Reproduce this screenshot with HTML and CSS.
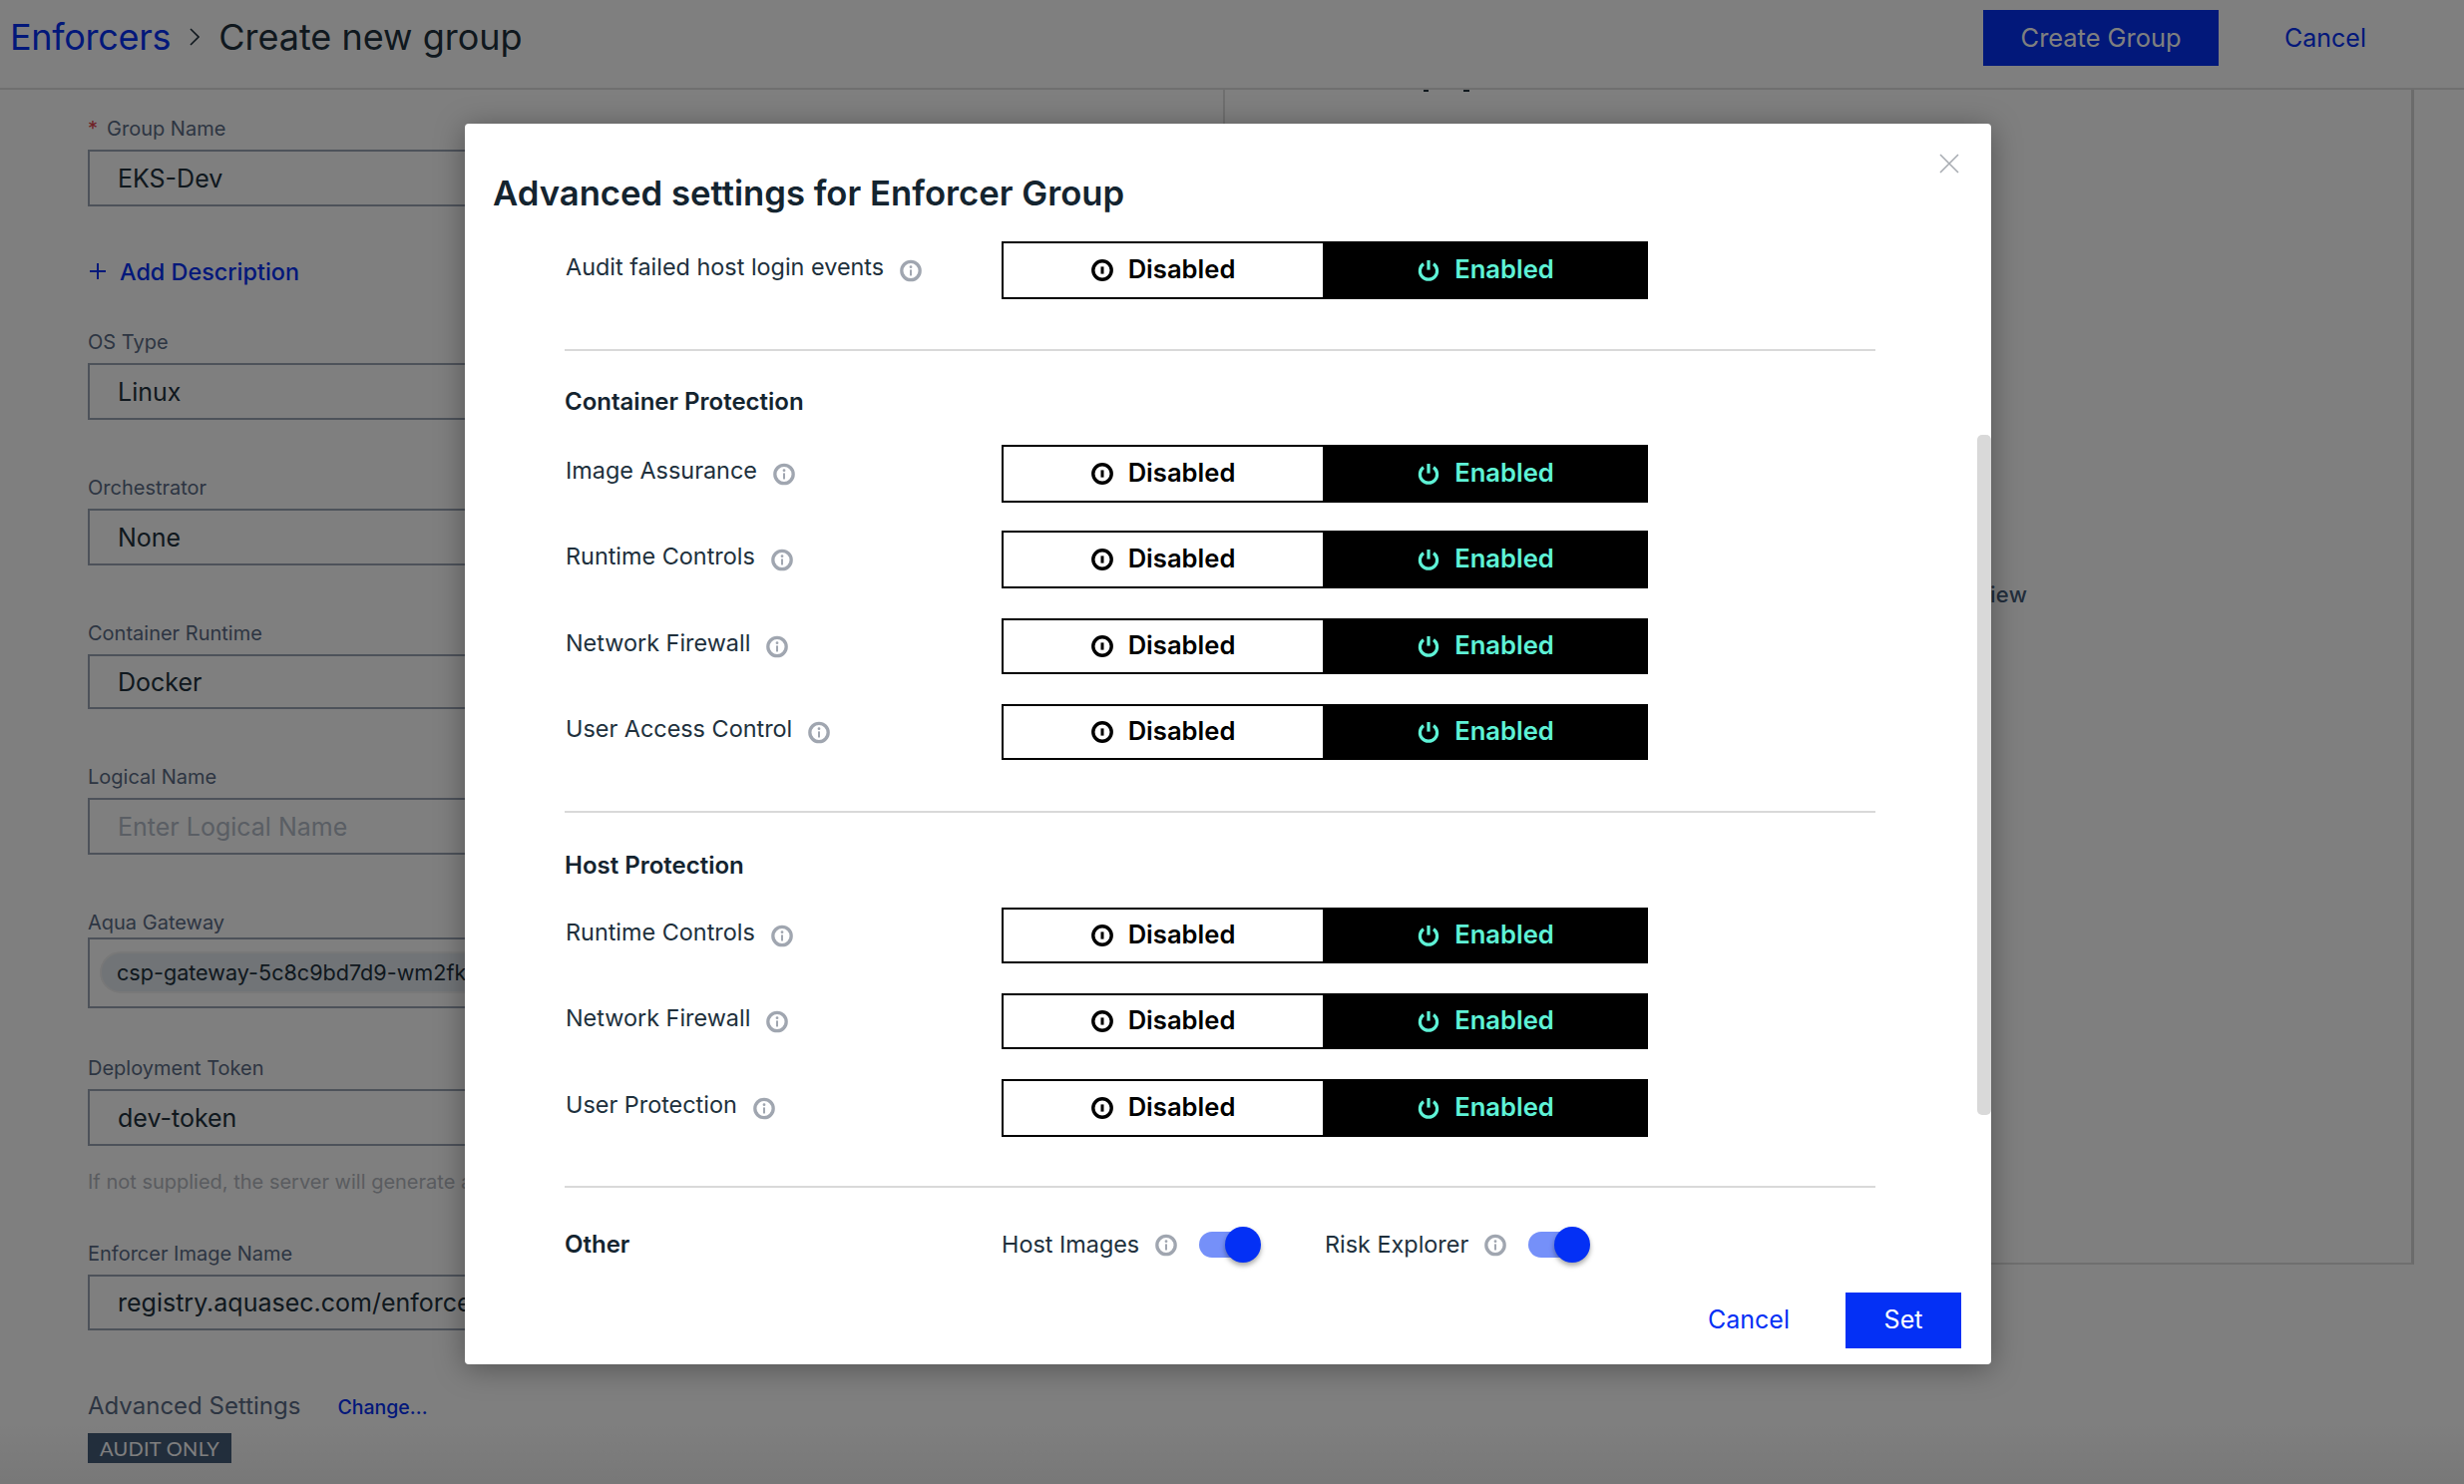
FILE: index.html
```html
<!DOCTYPE html>
<html lang="en">
<head>
<meta charset="utf-8">
<title>Create new group</title>
<link rel="stylesheet" href="styles.css">
</head>
<body>
<svg class="defs" width="0" height="0" aria-hidden="true">
  <symbol id="i-info" viewBox="0 0 24 24">
    <circle cx="12" cy="12" r="10" fill="none" stroke="#a0a6b0" stroke-width="3.6"/>
    <circle cx="12" cy="7.8" r="1.5" fill="#a0a6b0"/>
    <path d="M12 10.8v6.6" stroke="#a0a6b0" stroke-width="2.2" fill="none"/>
  </symbol>
  <symbol id="i-off" viewBox="0 0 22 22">
    <circle cx="11" cy="11" r="9.2" fill="none" stroke="#000" stroke-width="3.4"/>
    <path d="M11 7.4v7.2" stroke="#000" stroke-width="3" fill="none"/>
  </symbol>
  <symbol id="i-on" viewBox="0 0 22 22">
    <path d="M6 4.6a8.6 8.6 0 1 0 10 0" fill="none" stroke="#5ef2d6" stroke-width="3.2"/>
    <path d="M11 1v9.6" stroke="#5ef2d6" stroke-width="3.2" fill="none"/>
  </symbol>
</svg>

<div class="page">
  <header class="topbar">
    <nav class="crumbs">
      <a class="crumb-link">Enforcers</a>
      <svg class="crumb-sep" viewBox="0 0 10 18"><path d="M1 1l8 8-8 8" fill="none" stroke="#fff" stroke-width="1.6"/></svg>
      <span class="crumb-current">Create new group</span>
    </nav>
    <div class="top-actions">
      <button class="btn-primary">Create Group</button>
      <a class="top-cancel">Cancel</a>
    </div>
  </header>

  <main class="content">
    <section class="form">
      <div class="field field-first">
        <label class="label"><span class="req">*</span>Group Name</label>
        <div class="input">EKS-Dev</div>
      </div>
      <a class="add-desc">
        <svg class="plus" viewBox="0 0 18 18"><path d="M9 1v16M1 9h16" stroke="#0430f5" stroke-width="2" fill="none"/></svg>
        Add Description
      </a>
      <div class="field field-os">
        <label class="label">OS Type</label>
        <div class="input">Linux</div>
      </div>
      <div class="field">
        <label class="label">Orchestrator</label>
        <div class="input">None</div>
      </div>
      <div class="field">
        <label class="label">Container Runtime</label>
        <div class="input input-55">Docker</div>
      </div>
      <div class="field">
        <label class="label">Logical Name</label>
        <div class="input input-placeholder">Enter Logical Name</div>
      </div>
      <div class="field field-tight">
        <label class="label label-close">Aqua Gateway</label>
        <div class="input input-chip"><span class="chip">csp-gateway-5c8c9bd7d9-wm2fk</span></div>
      </div>
      <div class="field field-gap48">
        <label class="label">Deployment Token</label>
        <div class="input">dev-token</div>
        <p class="help">If not supplied, the server will generate a token automatically</p>
      </div>
      <div class="field field-gap48">
        <label class="label">Enforcer Image Name</label>
        <div class="input input-56">registry.aquasec.com/enforcer:latest</div>
      </div>
      <div class="advanced">
        <span class="advanced-title">Advanced Settings</span>
        <a class="change">Change...</a>
      </div>
      <span class="badge">AUDIT ONLY</span>
    </section>

    <section class="panel">
      <span class="mark mark-a"></span>
      <span class="mark mark-b"></span>
      <p class="panel-note">Overview</p>
    </section>
  </main>

  <div class="overlay">
    <div class="modal">
      <svg class="close" viewBox="0 0 20 20"><path d="M1 1l18 18M19 1L1 19" stroke="#a8acb2" stroke-width="1.6" fill="none"/></svg>
      <h2 class="modal-title">Advanced settings for Enforcer Group</h2>
      <div class="modal-body">
        <div class="section section-audit">
          <div class="row">
            <div class="row-label"><span class="row-text">Audit failed host login events</span><svg class="info"><use href="#i-info"/></svg></div>
            <div class="toggle">
              <div class="seg seg-off"><svg class="seg-icon"><use href="#i-off"/></svg><span class="seg-text">Disabled</span></div>
              <div class="seg seg-on"><svg class="seg-icon"><use href="#i-on"/></svg><span class="seg-text">Enabled</span></div>
            </div>
          </div>
        </div>

        <div class="section section-container">
          <h3 class="section-title">Container Protection</h3>
          <div class="rows">
            <div class="row">
              <div class="row-label"><span class="row-text">Image Assurance</span><svg class="info"><use href="#i-info"/></svg></div>
              <div class="toggle">
                <div class="seg seg-off"><svg class="seg-icon"><use href="#i-off"/></svg><span class="seg-text">Disabled</span></div>
                <div class="seg seg-on"><svg class="seg-icon"><use href="#i-on"/></svg><span class="seg-text">Enabled</span></div>
              </div>
            </div>
            <div class="row row-tight">
              <div class="row-label"><span class="row-text">Runtime Controls</span><svg class="info"><use href="#i-info"/></svg></div>
              <div class="toggle">
                <div class="seg seg-off"><svg class="seg-icon"><use href="#i-off"/></svg><span class="seg-text">Disabled</span></div>
                <div class="seg seg-on"><svg class="seg-icon"><use href="#i-on"/></svg><span class="seg-text">Enabled</span></div>
              </div>
            </div>
            <div class="row">
              <div class="row-label"><span class="row-text">Network Firewall</span><svg class="info"><use href="#i-info"/></svg></div>
              <div class="toggle toggle-56">
                <div class="seg seg-off"><svg class="seg-icon"><use href="#i-off"/></svg><span class="seg-text">Disabled</span></div>
                <div class="seg seg-on"><svg class="seg-icon"><use href="#i-on"/></svg><span class="seg-text">Enabled</span></div>
              </div>
            </div>
            <div class="row">
              <div class="row-label"><span class="row-text">User Access Control</span><svg class="info"><use href="#i-info"/></svg></div>
              <div class="toggle toggle-56">
                <div class="seg seg-off"><svg class="seg-icon"><use href="#i-off"/></svg><span class="seg-text">Disabled</span></div>
                <div class="seg seg-on"><svg class="seg-icon"><use href="#i-on"/></svg><span class="seg-text">Enabled</span></div>
              </div>
            </div>
          </div>
        </div>

        <div class="section section-host">
          <h3 class="section-title">Host Protection</h3>
          <div class="rows">
            <div class="row">
              <div class="row-label"><span class="row-text">Runtime Controls</span><svg class="info"><use href="#i-info"/></svg></div>
              <div class="toggle toggle-56">
                <div class="seg seg-off"><svg class="seg-icon"><use href="#i-off"/></svg><span class="seg-text">Disabled</span></div>
                <div class="seg seg-on"><svg class="seg-icon"><use href="#i-on"/></svg><span class="seg-text">Enabled</span></div>
              </div>
            </div>
            <div class="row">
              <div class="row-label"><span class="row-text">Network Firewall</span><svg class="info"><use href="#i-info"/></svg></div>
              <div class="toggle toggle-56">
                <div class="seg seg-off"><svg class="seg-icon"><use href="#i-off"/></svg><span class="seg-text">Disabled</span></div>
                <div class="seg seg-on"><svg class="seg-icon"><use href="#i-on"/></svg><span class="seg-text">Enabled</span></div>
              </div>
            </div>
            <div class="row">
              <div class="row-label"><span class="row-text">User Protection</span><svg class="info"><use href="#i-info"/></svg></div>
              <div class="toggle">
                <div class="seg seg-off"><svg class="seg-icon"><use href="#i-off"/></svg><span class="seg-text">Disabled</span></div>
                <div class="seg seg-on"><svg class="seg-icon"><use href="#i-on"/></svg><span class="seg-text">Enabled</span></div>
              </div>
            </div>
          </div>
        </div>

        <div class="other">
          <h3 class="section-title other-title">Other</h3>
          <div class="switches">
            <div class="switch-item">
              <span class="switch-text">Host Images</span><svg class="info"><use href="#i-info"/></svg>
              <span class="switch"><span class="knob"></span></span>
            </div>
            <div class="switch-item">
              <span class="switch-text">Risk Explorer</span><svg class="info"><use href="#i-info"/></svg>
              <span class="switch"><span class="knob"></span></span>
            </div>
          </div>
        </div>
      </div>
      <div class="modal-footer">
        <a class="modal-cancel">Cancel</a>
        <button class="btn-set">Set</button>
      </div>
      <div class="scrollbar"></div>
    </div>
  </div>
</div>
</body>
</html>
```

FILE: styles.css
```css
* { box-sizing: border-box; }
html, body { margin: 0; padding: 0; }
body {
  width: 2470px;
  height: 1488px;
  overflow: hidden;
  font-family: "Inter", "Liberation Sans", sans-serif;
  color: #20303c;
  background: #fff;
}
.defs { position: absolute; }

.page {
  position: relative;
  width: 2470px;
  height: 1488px;
  overflow: hidden;
  background: linear-gradient(to bottom, #fff 0, #fff 1425px, #f0f0f0 1488px);
}

/* top bar */
.topbar {
  height: 90px;
  border-bottom: 2px solid #dedede;
  display: flex;
  justify-content: space-between;
  align-items: flex-start;
  background: #fff;
}
.crumbs {
  display: flex;
  align-items: center;
  height: 74px;
  padding-left: 10px;
  font-size: 36px;
}
.crumb-link { color: #0430f5; letter-spacing: -.3px; }
.crumb-sep { width: 10px; height: 18px; margin: 0 19px 0 19px; }
.crumb-sep path { stroke: #20303c; }
.crumb-current { color: #20303c; }
.top-actions { display: flex; align-items: center; padding-top: 10px; }
.btn-primary {
  width: 236px;
  height: 56px;
  border: 0;
  padding: 0 0 2px;
  background: #0430f5;
  color: #fff;
  font: 400 25.4px "Inter", sans-serif;
}
.top-cancel {
  margin-left: 66px;
  margin-right: 98px;
  font-size: 25px;
  color: #0430f5;
  line-height: 54px;
}

/* page body */
.content { display: flex; height: 1177px; }
.form {
  width: 1226px;
  flex: none;
  padding-left: 88px;
  padding-right: 88px;
  position: relative;
}
.field { margin-top: 56px; }
.field-first { margin-top: 27px; }
.field-os { margin-top: 44px; }
.field-tight { margin-top: 56px; }
.field-gap48 { margin-top: 48px; }
.label {
  display: block;
  height: 24px;
  line-height: 24px;
  margin-bottom: 9px;
  font-size: 20px;
  color: #5a6b85;
}
.label-close { margin-bottom: 3px; }
.req { color: #e0404a; margin-right: 9px; }
.input {
  height: 57px;
  border: 2px solid #9aa4b4;
  padding-left: 28px;
  display: flex;
  align-items: center;
  font-size: 25px;
  white-space: nowrap;
  overflow: hidden;
}
.input-55 { height: 55px; }
.input-56 { height: 56px; }
.input-placeholder { color: #b4bcc8; }
.input-chip { height: 71px; padding-left: 10px; padding-bottom: 2px; }
.chip {
  height: 42px;
  padding: 0 18px 0 15px;
  border: 2px solid #f0f0f0;
  border-radius: 21px;
  background: #e2e8ee;
  font-size: 21.6px;
  line-height: 38px;
  width: 620px;
}
.help {
  margin: 24px 0 0;
  height: 24px;
  line-height: 24px;
  font-size: 20px;
  color: #b4b8c0;
  white-space: nowrap;
}
.add-desc {
  display: flex;
  align-items: center;
  height: 30px;
  margin-top: 50px;
  color: #0430f5;
  font-size: 23.4px;
  font-weight: 500;
}
.plus { width: 18px; height: 18px; margin-right: 13px; margin-left: 1px; }
.advanced {
  margin-top: 60px;
  display: flex;
  align-items: center;
  height: 30px;
}
.advanced-title { font-size: 24px; color: #5a6b85; }
.change { margin-left: 37px; font-size: 19.5px; font-weight: 500; color: #0430f5; margin-top: 3px; }
.badge {
  display: block;
  width: 144px;
  height: 30px;
  margin-top: 13px;
  background: #445c78;
  color: #fff;
  font-family: "Lato", sans-serif;
  font-size: 20px;
  line-height: 30px;
  text-align: center;
  letter-spacing: .3px;
}

.panel {
  position: relative;
  width: 1194px;
  height: 1178px;
  border-left: 2px solid #dedede;
  border-right: 3px solid #d6d6d6;
  border-bottom: 2px solid #dedede;
  margin-top: 0;
}
.mark { position: absolute; top: 0; height: 2px; background: #20303c; }
.mark-a { left: 199px; width: 5px; }
.mark-b { left: 239px; width: 6px; }
.panel-note {
  margin: 493px 0 0 702px;
  font-size: 22px;
  line-height: 26px;
  font-weight: 500;
  color: #445c78;
  letter-spacing: .3px;
}

/* overlay + modal */
.overlay {
  position: absolute;
  inset: 0;
  background: rgba(0, 0, 0, .5);
}
.modal {
  position: absolute;
  left: 466px;
  top: 124px;
  width: 1530px;
  height: 1244px;
  background: #fff;
  border-radius: 4px;
  box-shadow: 0 4px 30px rgba(0, 0, 0, .35);
  overflow: hidden;
}
.close { position: absolute; left: 1478px; top: 30px; width: 20px; height: 20px; }
.modal-title {
  margin: 47px 0 0 28px;
  padding-bottom: 1px;
  font-size: 34.7px;
  line-height: 44px;
  font-weight: 600;
  color: #14242f;
}
.modal-body { margin-top: 26px; padding-left: 100px; padding-right: 116px; }
.section { border-bottom: 2px solid #d9d9d9; }
.section-audit { padding-bottom: 50px; }
.section-container { padding-top: 36px; padding-bottom: 51px; }
.section-host { padding-top: 38px; padding-bottom: 49px; }
.section-title {
  margin: 0;
  font-size: 24px;
  line-height: 30px;
  font-weight: 600;
  color: #14242f;
}
.section-container .section-title { margin-bottom: 28px; }
.section-host .section-title { margin-bottom: 27px; }
.rows { display: flex; flex-direction: column; gap: 30px; }
.row-tight { margin-top: -2px; }
.row { display: flex; align-items: center; }
.row-label { width: 438px; flex: none; display: flex; align-items: center; padding-left: 1px; }
.row-text { font-size: 23.4px; line-height: 28px; color: #20303c; margin-bottom: 6px; }
.info { width: 22px; height: 23px; flex: none; margin-left: 16px; }

.toggle {
  width: 648px;
  height: 58px;
  display: flex;
  flex: none;
  border: 2px solid #000;
  background: #000;
}
.toggle-56 { height: 56px; }
.seg {
  display: flex;
  align-items: center;
  justify-content: center;
  gap: 15px;
  font-size: 25.6px;
  font-weight: 600;
}
.seg-off { width: 320px; background: #fff; color: #000; }
.seg-on { flex: 1; padding-left: 3px; color: #5ef2d6; }
.seg-icon { width: 22px; height: 22px; flex: none; }
.seg-text { padding-bottom: 3px; }

.other { display: flex; align-items: center; margin-top: 39px; height: 36px; }
.other-title { width: 438px; flex: none; }
.switches { display: flex; }
.switch-item { display: flex; align-items: center; width: 324px; }
.switch-text { font-size: 23.4px; line-height: 28px; color: #20303c; }
.switch {
  position: relative;
  width: 52px;
  height: 26px;
  margin-left: 21.5px;
  border-radius: 13px;
  background: #7590f9;
}
.knob {
  position: absolute;
  right: -10px;
  top: -5px;
  width: 36px;
  height: 36px;
  border-radius: 50%;
  background: #0430f5;
  box-shadow: 0 3px 5px rgba(0, 0, 0, .35);
}
.modal-footer {
  display: flex;
  justify-content: flex-end;
  align-items: center;
  margin-top: 30px;
  padding-right: 30px;
}
.modal-cancel { font-size: 25px; color: #0430f5; margin-right: 56px; margin-bottom: 2px; }
.btn-set {
  width: 116px;
  height: 56px;
  border: 0;
  padding: 0 0 2px;
  background: #0430f5;
  color: #fff;
  font: 400 25px "Inter", sans-serif;
}
.scrollbar {
  position: absolute;
  left: 1516px;
  top: 312px;
  width: 14px;
  height: 682px;
  border-radius: 5px;
  background: #d9d9d9;
}
```
